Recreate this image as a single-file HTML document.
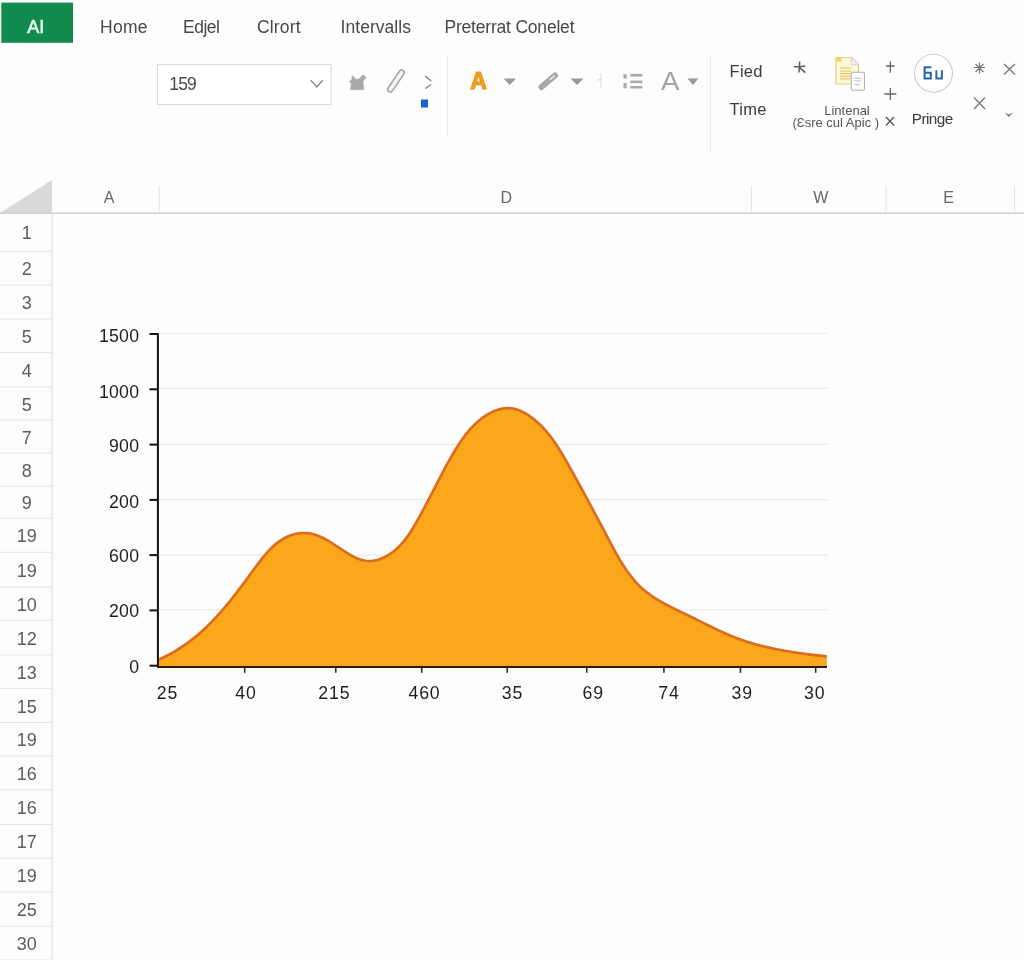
<!DOCTYPE html>
<html><head><meta charset="utf-8"><style>
html,body{margin:0;padding:0;background:#fdfdfd;}
body{width:1024px;height:960px;overflow:hidden;position:relative;font-family:"Liberation Sans",sans-serif;}
svg{position:absolute;left:0;top:0;will-change:transform;}
.tab{font-size:17.5px;fill:#484848;}
.rn{font-size:18px;fill:#5c5c5c;text-anchor:middle;}
.rl{stroke:#e6e6e6;stroke-width:1;}
.yl{font-size:17.7px;fill:#1e1e1e;text-anchor:end;letter-spacing:0.25px;}
.xl{font-size:17.7px;fill:#1e1e1e;text-anchor:middle;letter-spacing:0.9px;}
.tk{stroke:#111;stroke-width:2;}
.tk2{stroke:#222;stroke-width:1.5;}
.gl{stroke:#ebebeb;stroke-width:1.2;}
.ch{font-size:16px;fill:#666;text-anchor:middle;}
.rb{font-size:16.5px;fill:#3c3c3c;letter-spacing:0.3px;}
.gi{fill:#a9a9a9;}
</style></head><body>
<svg width="1024" height="960" viewBox="0 0 1024 960">
<rect x="1.3" y="2.6" width="71.7" height="40.2" fill="#118a4e"/>
<text x="35.7" y="32.8" font-size="18" fill="#e2fbea" text-anchor="middle" stroke="#e2fbea" stroke-width="0.65">AI</text>
<text x="100" y="33" class="tab" textLength="47.5">Home</text>
<text x="183" y="33" class="tab" textLength="37">Edjel</text>
<text x="257" y="33" class="tab" textLength="43.5">Clrort</text>
<text x="340.5" y="33" class="tab" textLength="70.5">Intervalls</text>
<text x="444.5" y="33" class="tab" textLength="130">Preterrat Conelet</text>

<rect x="157.5" y="64.5" width="173.5" height="40" fill="#fff" stroke="#dadada" stroke-width="1.1"/>
<text x="169.3" y="90" font-size="17.5" fill="#4a4a4a" textLength="27.5">159</text>
<path d="M310.8,80.3 L316.8,87 L322.8,80.3" fill="none" stroke="#858585" stroke-width="1.3"/>

<line x1="447.5" y1="55" x2="447.5" y2="137" stroke="#e8e8e8" stroke-width="1"/>
<line x1="710.5" y1="55" x2="710.5" y2="153" stroke="#e8e8e8" stroke-width="1"/>
<!-- blob icon -->
<path class="gi" d="M350.7,89.5 L351.3,83.1 L349.1,81.5 L351.8,79.9 L352.4,75.8 L356.1,79.5 L359.9,78.8 L361.5,76.1 L364.2,75.4 L366,77.7 L363.8,79.9 L362.8,81.5 L363.8,89.8 Z" stroke="#a9a9a9" stroke-width="0.8" stroke-linejoin="round"/>
<!-- pencil -->
<rect x="383.2" y="78.5" width="25.5" height="5.2" rx="2.6" transform="rotate(-56 395.9 81.1)" fill="#f4f4f4" stroke="#a6a6a6" stroke-width="1.6"/>
<!-- broken chevron -->
<path d="M425,76 L431.2,80.8" stroke="#8c8c8c" stroke-width="1.5"/>
<path d="M431,84.5 L425.3,88.7" stroke="#8c8c8c" stroke-width="1.5"/>
<rect x="421" y="99.5" width="7" height="8" fill="#1a62d0"/>
<!-- orange A -->
<text x="470.3" y="89" font-size="23" font-weight="bold" fill="#f2a023" stroke="#eb961c" stroke-width="1.1" stroke-linejoin="round" textLength="16.6" lengthAdjust="spacingAndGlyphs">A</text>
<path d="M503.5,78.5 L516,78.5 L509.75,85 Z" fill="#9a9a9a"/>
<!-- paperclip -->
<path d="M541.5,87 L555,75.5" stroke="#a8a8a8" stroke-width="6" stroke-linecap="round"/>
<path d="M550,79.5 L554.5,76" stroke="#fff" stroke-width="1.1" stroke-linecap="round"/>
<path d="M570.5,78.5 L583.5,78.5 L577,85 Z" fill="#9a9a9a"/>
<path d="M597,80.5 L601,79 M601,73 L601,88" fill="none" stroke="#dedede" stroke-width="1.1"/>
<!-- list -->
<rect x="623.5" y="74.2" width="3.2" height="4.4" class="gi"/>
<rect x="623.5" y="83" width="3.2" height="5.3" class="gi"/>
<rect x="630.4" y="73.9" width="12" height="2.7" class="gi"/>
<rect x="630.4" y="80.6" width="12" height="2.5" class="gi"/>
<rect x="630.4" y="86" width="12" height="2.5" class="gi"/>
<!-- gray A -->
<text x="661" y="89.5" font-size="25.5" fill="#a4a4a4" textLength="18.5" lengthAdjust="spacingAndGlyphs">A</text>
<path d="M687.5,78.5 L698.5,78.5 L693,85 Z" fill="#9a9a9a"/>

<!-- right group -->
<text x="729.5" y="77.2" class="rb">Fied</text>
<text x="729.5" y="115" class="rb">Time</text>
<path d="M799.7,61.5 L799,72.5 M794,66.8 L799.5,66.8 L805.3,66 M799.6,67.5 L805.3,72.6" fill="none" stroke="#5a5a5a" stroke-width="1.5"/>
<!-- doc icon -->
<path d="M835.8,57.5 L851.3,57.5 L858.6,64.8 L858.6,84 L835.8,84 Z" fill="#fdf6d8" stroke="#e6cf80" stroke-width="1.2" stroke-linejoin="round"/>
<path d="M851.3,57.5 L858.6,64.8" stroke="#b9b9b9" stroke-width="1.2"/>
<path d="M851.3,57.5 L851.3,64.8 L858.6,64.8 Z" fill="#f1f1f1" stroke="#cfcfcf" stroke-width="0.8"/>
<rect x="836.5" y="58" width="5" height="3.5" fill="#f3d060"/>
<path d="M840,68 L851,68 M840,71.1 L851,71.1 M840,73.6 L851,73.6 M840,76.2 L851,76.2 M840,78.8 L850,78.8" stroke="#e3c060" stroke-width="1"/>
<rect x="851.2" y="72.2" width="13.3" height="18" rx="1.5" fill="#fbfbfb" stroke="#b4b4b4" stroke-width="1.1"/>
<path d="M854.2,78.3 L861,78.3 M854.2,80.8 L861,80.8 M854.2,84.5 L860,84.5" stroke="#bdbdbd" stroke-width="0.9"/>
<text x="847" y="114.5" font-size="13" fill="#555" text-anchor="middle">Lintenal</text>
<text x="835.8" y="127" font-size="13" fill="#555" text-anchor="middle">(Ɛsre cul Apic )</text>
<!-- plus signs -->
<path d="M890.3,61.5 L890.3,72.8 M886,66 L894.6,66" stroke="#666" stroke-width="1.3"/>
<path d="M890.3,88 L890.3,100 M884.3,94 L896.3,94" stroke="#666" stroke-width="1.3"/>
<path d="M886,117 L894,125.5 M894,117 L886,125.5" stroke="#555" stroke-width="1.3"/>
<!-- circle -->
<circle cx="933.5" cy="73.3" r="19" fill="#fff" stroke="#cdcdcd" stroke-width="1.1"/>
<path d="M931.3,67.2 L924.6,67.2 L924.6,78.5 L930.8,78.5 L930.8,72.8 L925,72.8" fill="#e8f8ff" stroke="#2b67aa" stroke-width="2.1"/>
<path d="M936.4,70.2 L936.4,78.5 L941.9,78.5 M941.9,70.2 L941.9,79.4" fill="none" stroke="#2b67aa" stroke-width="2"/>
<text x="911.8" y="124.3" font-size="15.3" fill="#3c3c3c" textLength="41.5">Pringe</text>
<!-- asterisk right -->
<path d="M979.5,62.5 L979.5,73.5 M974,67.5 L985,67.5 M975.5,64 L983.5,72 M983.5,64 L975.5,72" stroke="#777" stroke-width="1.2"/>
<path d="M1004,64 L1015,74.5 M1015,64 L1004,74.5" stroke="#777" stroke-width="1.3"/>
<path d="M974,97.5 L985,109 M985,97.5 L974,109" stroke="#777" stroke-width="1.3"/>
<path d="M1004.6,112.4 L1008.8,117.3 L1013.2,112.4 L1008.8,114.3 Z" fill="#8a8a8a"/>

<path d="M0,213 L52,180 L52,213 Z" fill="#d9d9d9"/>
<line x1="0" y1="213.3" x2="1024" y2="213.3" stroke="#d0d0d0" stroke-width="1.5"/>
<line x1="159.3" y1="186" x2="159.3" y2="213" stroke="#e4e4e4" stroke-width="1"/>
<line x1="751.5" y1="186" x2="751.5" y2="213" stroke="#e4e4e4" stroke-width="1"/>
<line x1="886" y1="186" x2="886" y2="213" stroke="#e4e4e4" stroke-width="1"/>
<line x1="1014.5" y1="186" x2="1014.5" y2="213" stroke="#e4e4e4" stroke-width="1"/>
<text x="109" y="203" class="ch">A</text>
<text x="506.3" y="203" class="ch">D</text>
<text x="820.8" y="203" class="ch">W</text>
<text x="948.6" y="203" class="ch">E</text>

<line x1="52.2" y1="213" x2="52.2" y2="960" stroke="#e0e0e0" stroke-width="1.2"/>
<text x="26.8" y="239.2" class="rn">1</text>
<text x="26.8" y="275.2" class="rn">2</text>
<text x="26.8" y="309.1" class="rn">3</text>
<text x="26.8" y="342.9" class="rn">5</text>
<text x="26.8" y="376.8" class="rn">4</text>
<text x="26.8" y="410.6" class="rn">5</text>
<text x="26.8" y="443.6" class="rn">7</text>
<text x="26.8" y="476.5" class="rn">8</text>
<text x="26.8" y="509.1" class="rn">9</text>
<text x="26.8" y="542.3" class="rn">19</text>
<text x="26.8" y="576.7" class="rn">19</text>
<text x="26.8" y="610.7" class="rn">10</text>
<text x="26.8" y="644.6" class="rn">12</text>
<text x="26.8" y="678.7" class="rn">13</text>
<text x="26.8" y="712.5" class="rn">15</text>
<text x="26.8" y="746.2" class="rn">19</text>
<text x="26.8" y="779.8" class="rn">16</text>
<text x="26.8" y="814.1" class="rn">16</text>
<text x="26.8" y="848.4" class="rn">17</text>
<text x="26.8" y="882.1" class="rn">19</text>
<text x="26.8" y="916.1" class="rn">25</text>
<text x="26.8" y="950.1" class="rn">30</text>
<line x1="0" y1="251.3" x2="52" y2="251.3" class="rl"/>
<line x1="0" y1="285.1" x2="52" y2="285.1" class="rl"/>
<line x1="0" y1="319.1" x2="52" y2="319.1" class="rl"/>
<line x1="0" y1="352.6" x2="52" y2="352.6" class="rl"/>
<line x1="0" y1="387.0" x2="52" y2="387.0" class="rl"/>
<line x1="0" y1="420.2" x2="52" y2="420.2" class="rl"/>
<line x1="0" y1="453.0" x2="52" y2="453.0" class="rl"/>
<line x1="0" y1="486.0" x2="52" y2="486.0" class="rl"/>
<line x1="0" y1="518.3" x2="52" y2="518.3" class="rl"/>
<line x1="0" y1="552.3" x2="52" y2="552.3" class="rl"/>
<line x1="0" y1="587.1" x2="52" y2="587.1" class="rl"/>
<line x1="0" y1="620.3" x2="52" y2="620.3" class="rl"/>
<line x1="0" y1="655.0" x2="52" y2="655.0" class="rl"/>
<line x1="0" y1="688.4" x2="52" y2="688.4" class="rl"/>
<line x1="0" y1="722.5" x2="52" y2="722.5" class="rl"/>
<line x1="0" y1="755.9" x2="52" y2="755.9" class="rl"/>
<line x1="0" y1="789.8" x2="52" y2="789.8" class="rl"/>
<line x1="0" y1="824.5" x2="52" y2="824.5" class="rl"/>
<line x1="0" y1="858.3" x2="52" y2="858.3" class="rl"/>
<line x1="0" y1="892.0" x2="52" y2="892.0" class="rl"/>
<line x1="0" y1="926.2" x2="52" y2="926.2" class="rl"/>
<line x1="0" y1="960.0" x2="52" y2="960.0" class="rl"/>
<line x1="159" y1="609.8" x2="827.5" y2="609.8" class="gl"/>
<line x1="159" y1="554.8" x2="827.5" y2="554.8" class="gl"/>
<line x1="159" y1="499.7" x2="827.5" y2="499.7" class="gl"/>
<line x1="159" y1="444.4" x2="827.5" y2="444.4" class="gl"/>
<line x1="159" y1="388.4" x2="827.5" y2="388.4" class="gl"/>
<line x1="159" y1="333.5" x2="827.5" y2="333.5" class="gl"/>
<text x="139.3" y="342.3" class="yl">1500</text>
<line x1="149.5" y1="334.0" x2="158" y2="334.0" class="tk"/>
<text x="139.3" y="397.5" class="yl">1000</text>
<line x1="149.5" y1="389.3" x2="158" y2="389.3" class="tk"/>
<text x="139.3" y="452.0" class="yl">900</text>
<line x1="149.5" y1="444.6" x2="158" y2="444.6" class="tk"/>
<text x="139.3" y="507.9" class="yl">200</text>
<line x1="149.5" y1="499.9" x2="158" y2="499.9" class="tk"/>
<text x="139.3" y="562.2" class="yl">600</text>
<line x1="149.5" y1="555.1" x2="158" y2="555.1" class="tk"/>
<text x="139.3" y="617.0" class="yl">200</text>
<line x1="149.5" y1="610.4" x2="158" y2="610.4" class="tk"/>
<text x="139.3" y="672.6" class="yl">0</text>
<line x1="149.5" y1="665.7" x2="158" y2="665.7" class="tk"/>
<path d="M158.00,659.87 L160.38,658.88 L162.57,657.86 L164.73,656.81 L166.86,655.74 L168.96,654.64 L171.03,653.51 L173.08,652.36 L175.09,651.18 L177.08,649.98 L179.05,648.75 L180.99,647.50 L182.90,646.22 L184.79,644.92 L186.66,643.60 L188.50,642.26 L190.32,640.89 L192.12,639.50 L193.89,638.10 L195.65,636.67 L197.38,635.22 L199.10,633.75 L200.79,632.26 L202.47,630.75 L204.13,629.22 L205.77,627.68 L207.40,626.11 L209.01,624.53 L210.60,622.94 L212.18,621.32 L213.74,619.69 L215.30,618.05 L216.83,616.39 L218.36,614.71 L219.87,613.02 L221.37,611.31 L222.86,609.59 L224.34,607.86 L225.81,606.12 L227.27,604.36 L228.72,602.59 L230.16,600.81 L231.60,599.02 L233.03,597.22 L234.45,595.40 L235.87,593.58 L237.28,591.75 L238.69,589.91 L240.09,588.06 L241.50,586.20 L242.89,584.33 L244.29,582.46 L245.68,580.58 L247.08,578.69 L248.47,576.79 L249.86,574.89 L251.25,572.99 L252.65,571.08 L254.05,569.17 L255.45,567.25 L256.85,565.34 L258.27,563.44 L259.70,561.56 L261.15,559.70 L262.61,557.85 L264.09,556.04 L265.59,554.26 L267.11,552.52 L268.67,550.82 L270.25,549.17 L271.86,547.57 L273.51,546.03 L275.20,544.55 L276.92,543.14 L278.68,541.80 L280.49,540.53 L282.35,539.35 L284.26,538.25 L286.21,537.24 L288.22,536.32 L290.29,535.51 L292.41,534.79 L294.57,534.19 L296.77,533.71 L298.99,533.34 L301.22,533.11 L303.47,533.00 L305.70,533.03 L307.93,533.20 L310.13,533.52 L312.32,533.97 L314.48,534.56 L316.63,535.26 L318.76,536.06 L320.87,536.97 L322.97,537.97 L325.05,539.05 L327.12,540.20 L329.18,541.41 L331.23,542.67 L333.26,543.97 L335.29,545.30 L337.32,546.64 L339.33,547.99 L341.35,549.34 L343.36,550.66 L345.37,551.96 L347.38,553.22 L349.39,554.42 L351.41,555.56 L353.43,556.62 L355.46,557.60 L357.49,558.48 L359.54,559.25 L361.60,559.90 L363.66,560.41 L365.74,560.78 L367.84,561.00 L369.95,561.05 L372.08,560.92 L374.22,560.63 L376.36,560.19 L378.50,559.59 L380.62,558.86 L382.73,558.00 L384.82,557.01 L386.88,555.91 L388.89,554.70 L390.87,553.39 L392.80,552.00 L394.67,550.52 L396.48,548.98 L398.21,547.36 L399.89,545.69 L401.50,543.97 L403.05,542.19 L404.54,540.37 L405.99,538.51 L407.38,536.61 L408.73,534.68 L410.05,532.72 L411.32,530.74 L412.56,528.74 L413.77,526.72 L414.96,524.70 L416.12,522.67 L417.26,520.64 L418.39,518.61 L419.51,516.59 L420.62,514.57 L421.71,512.55 L422.79,510.54 L423.86,508.53 L424.93,506.53 L425.98,504.52 L427.03,502.52 L428.08,500.52 L429.12,498.52 L430.15,496.52 L431.18,494.52 L432.21,492.53 L433.24,490.53 L434.27,488.53 L435.31,486.54 L436.34,484.54 L437.37,482.54 L438.41,480.54 L439.46,478.54 L440.51,476.53 L441.57,474.53 L442.63,472.52 L443.70,470.51 L444.79,468.49 L445.88,466.47 L446.99,464.45 L448.10,462.43 L449.23,460.40 L450.38,458.36 L451.54,456.32 L452.72,454.29 L453.92,452.26 L455.13,450.23 L456.37,448.21 L457.63,446.21 L458.91,444.22 L460.22,442.25 L461.56,440.30 L462.92,438.38 L464.31,436.48 L465.73,434.62 L467.19,432.79 L468.67,430.99 L470.20,429.23 L471.75,427.52 L473.35,425.85 L474.98,424.23 L476.65,422.66 L478.36,421.14 L480.12,419.68 L481.92,418.28 L483.76,416.94 L485.65,415.67 L487.59,414.47 L489.58,413.34 L491.61,412.29 L493.69,411.33 L495.80,410.46 L497.94,409.71 L500.10,409.09 L502.28,408.60 L504.46,408.26 L506.65,408.07 L508.83,408.06 L511.01,408.23 L513.17,408.57 L515.31,409.06 L517.43,409.71 L519.53,410.49 L521.60,411.39 L523.64,412.40 L525.64,413.52 L527.61,414.72 L529.53,416.00 L531.42,417.34 L533.25,418.73 L535.04,420.17 L536.79,421.66 L538.49,423.20 L540.16,424.78 L541.78,426.41 L543.37,428.07 L544.91,429.78 L546.43,431.51 L547.91,433.29 L549.36,435.09 L550.77,436.93 L552.16,438.79 L553.52,440.67 L554.85,442.59 L556.16,444.52 L557.45,446.47 L558.71,448.44 L559.96,450.43 L561.18,452.42 L562.39,454.43 L563.58,456.45 L564.76,458.48 L565.93,460.51 L567.08,462.55 L568.23,464.58 L569.36,466.62 L570.49,468.65 L571.61,470.68 L572.73,472.70 L573.85,474.71 L574.96,476.73 L576.06,478.73 L577.16,480.74 L578.26,482.74 L579.36,484.74 L580.45,486.73 L581.54,488.73 L582.62,490.72 L583.70,492.71 L584.78,494.70 L585.86,496.69 L586.93,498.67 L588.01,500.66 L589.08,502.65 L590.15,504.64 L591.22,506.62 L592.29,508.61 L593.36,510.61 L594.42,512.60 L595.49,514.60 L596.56,516.60 L597.62,518.60 L598.69,520.60 L599.76,522.61 L600.83,524.63 L601.90,526.64 L602.97,528.67 L604.04,530.70 L605.11,532.73 L606.19,534.77 L607.27,536.82 L608.35,538.87 L609.43,540.93 L610.52,542.99 L611.61,545.05 L612.72,547.11 L613.83,549.17 L614.95,551.23 L616.08,553.28 L617.23,555.32 L618.40,557.34 L619.58,559.36 L620.77,561.36 L621.99,563.35 L623.23,565.31 L624.49,567.26 L625.77,569.18 L627.08,571.08 L628.42,572.95 L629.79,574.79 L631.18,576.60 L632.61,578.38 L634.06,580.13 L635.56,581.83 L637.08,583.50 L638.65,585.13 L640.25,586.71 L641.90,588.25 L643.58,589.74 L645.31,591.19 L647.07,592.59 L648.87,593.95 L650.71,595.28 L652.57,596.56 L654.47,597.81 L656.40,599.03 L658.35,600.22 L660.32,601.38 L662.32,602.51 L664.34,603.62 L666.37,604.71 L668.42,605.78 L670.48,606.84 L672.56,607.88 L674.64,608.91 L676.73,609.93 L678.83,610.95 L680.92,611.95 L683.02,612.96 L685.12,613.97 L687.22,614.98 L689.30,615.99 L691.39,617.01 L693.46,618.03 L695.53,619.06 L697.60,620.09 L699.66,621.12 L701.72,622.15 L703.77,623.17 L705.83,624.20 L707.88,625.21 L709.94,626.23 L711.99,627.23 L714.05,628.23 L716.11,629.21 L718.17,630.19 L720.24,631.15 L722.31,632.10 L724.38,633.03 L726.47,633.95 L728.56,634.85 L730.66,635.73 L732.76,636.59 L734.88,637.42 L737.01,638.24 L739.15,639.03 L741.29,639.79 L743.45,640.54 L745.62,641.26 L747.80,641.96 L749.98,642.63 L752.17,643.29 L754.37,643.93 L756.58,644.55 L758.80,645.14 L761.02,645.72 L763.25,646.28 L765.48,646.82 L767.72,647.35 L769.97,647.85 L772.22,648.34 L774.48,648.82 L776.74,649.28 L779.00,649.72 L781.27,650.15 L783.54,650.56 L785.81,650.96 L788.09,651.35 L790.36,651.72 L792.64,652.08 L794.92,652.43 L797.20,652.77 L799.48,653.10 L801.77,653.41 L804.05,653.72 L806.33,654.01 L808.61,654.30 L810.89,654.58 L813.16,654.85 L815.44,655.11 L817.71,655.37 L819.98,655.61 L822.24,655.86 L824.51,656.09 L826.77,656.32 L826.8,667 L158,667 Z" fill="#fba71c"/>
<path d="M158.00,659.87 L160.38,658.88 L162.57,657.86 L164.73,656.81 L166.86,655.74 L168.96,654.64 L171.03,653.51 L173.08,652.36 L175.09,651.18 L177.08,649.98 L179.05,648.75 L180.99,647.50 L182.90,646.22 L184.79,644.92 L186.66,643.60 L188.50,642.26 L190.32,640.89 L192.12,639.50 L193.89,638.10 L195.65,636.67 L197.38,635.22 L199.10,633.75 L200.79,632.26 L202.47,630.75 L204.13,629.22 L205.77,627.68 L207.40,626.11 L209.01,624.53 L210.60,622.94 L212.18,621.32 L213.74,619.69 L215.30,618.05 L216.83,616.39 L218.36,614.71 L219.87,613.02 L221.37,611.31 L222.86,609.59 L224.34,607.86 L225.81,606.12 L227.27,604.36 L228.72,602.59 L230.16,600.81 L231.60,599.02 L233.03,597.22 L234.45,595.40 L235.87,593.58 L237.28,591.75 L238.69,589.91 L240.09,588.06 L241.50,586.20 L242.89,584.33 L244.29,582.46 L245.68,580.58 L247.08,578.69 L248.47,576.79 L249.86,574.89 L251.25,572.99 L252.65,571.08 L254.05,569.17 L255.45,567.25 L256.85,565.34 L258.27,563.44 L259.70,561.56 L261.15,559.70 L262.61,557.85 L264.09,556.04 L265.59,554.26 L267.11,552.52 L268.67,550.82 L270.25,549.17 L271.86,547.57 L273.51,546.03 L275.20,544.55 L276.92,543.14 L278.68,541.80 L280.49,540.53 L282.35,539.35 L284.26,538.25 L286.21,537.24 L288.22,536.32 L290.29,535.51 L292.41,534.79 L294.57,534.19 L296.77,533.71 L298.99,533.34 L301.22,533.11 L303.47,533.00 L305.70,533.03 L307.93,533.20 L310.13,533.52 L312.32,533.97 L314.48,534.56 L316.63,535.26 L318.76,536.06 L320.87,536.97 L322.97,537.97 L325.05,539.05 L327.12,540.20 L329.18,541.41 L331.23,542.67 L333.26,543.97 L335.29,545.30 L337.32,546.64 L339.33,547.99 L341.35,549.34 L343.36,550.66 L345.37,551.96 L347.38,553.22 L349.39,554.42 L351.41,555.56 L353.43,556.62 L355.46,557.60 L357.49,558.48 L359.54,559.25 L361.60,559.90 L363.66,560.41 L365.74,560.78 L367.84,561.00 L369.95,561.05 L372.08,560.92 L374.22,560.63 L376.36,560.19 L378.50,559.59 L380.62,558.86 L382.73,558.00 L384.82,557.01 L386.88,555.91 L388.89,554.70 L390.87,553.39 L392.80,552.00 L394.67,550.52 L396.48,548.98 L398.21,547.36 L399.89,545.69 L401.50,543.97 L403.05,542.19 L404.54,540.37 L405.99,538.51 L407.38,536.61 L408.73,534.68 L410.05,532.72 L411.32,530.74 L412.56,528.74 L413.77,526.72 L414.96,524.70 L416.12,522.67 L417.26,520.64 L418.39,518.61 L419.51,516.59 L420.62,514.57 L421.71,512.55 L422.79,510.54 L423.86,508.53 L424.93,506.53 L425.98,504.52 L427.03,502.52 L428.08,500.52 L429.12,498.52 L430.15,496.52 L431.18,494.52 L432.21,492.53 L433.24,490.53 L434.27,488.53 L435.31,486.54 L436.34,484.54 L437.37,482.54 L438.41,480.54 L439.46,478.54 L440.51,476.53 L441.57,474.53 L442.63,472.52 L443.70,470.51 L444.79,468.49 L445.88,466.47 L446.99,464.45 L448.10,462.43 L449.23,460.40 L450.38,458.36 L451.54,456.32 L452.72,454.29 L453.92,452.26 L455.13,450.23 L456.37,448.21 L457.63,446.21 L458.91,444.22 L460.22,442.25 L461.56,440.30 L462.92,438.38 L464.31,436.48 L465.73,434.62 L467.19,432.79 L468.67,430.99 L470.20,429.23 L471.75,427.52 L473.35,425.85 L474.98,424.23 L476.65,422.66 L478.36,421.14 L480.12,419.68 L481.92,418.28 L483.76,416.94 L485.65,415.67 L487.59,414.47 L489.58,413.34 L491.61,412.29 L493.69,411.33 L495.80,410.46 L497.94,409.71 L500.10,409.09 L502.28,408.60 L504.46,408.26 L506.65,408.07 L508.83,408.06 L511.01,408.23 L513.17,408.57 L515.31,409.06 L517.43,409.71 L519.53,410.49 L521.60,411.39 L523.64,412.40 L525.64,413.52 L527.61,414.72 L529.53,416.00 L531.42,417.34 L533.25,418.73 L535.04,420.17 L536.79,421.66 L538.49,423.20 L540.16,424.78 L541.78,426.41 L543.37,428.07 L544.91,429.78 L546.43,431.51 L547.91,433.29 L549.36,435.09 L550.77,436.93 L552.16,438.79 L553.52,440.67 L554.85,442.59 L556.16,444.52 L557.45,446.47 L558.71,448.44 L559.96,450.43 L561.18,452.42 L562.39,454.43 L563.58,456.45 L564.76,458.48 L565.93,460.51 L567.08,462.55 L568.23,464.58 L569.36,466.62 L570.49,468.65 L571.61,470.68 L572.73,472.70 L573.85,474.71 L574.96,476.73 L576.06,478.73 L577.16,480.74 L578.26,482.74 L579.36,484.74 L580.45,486.73 L581.54,488.73 L582.62,490.72 L583.70,492.71 L584.78,494.70 L585.86,496.69 L586.93,498.67 L588.01,500.66 L589.08,502.65 L590.15,504.64 L591.22,506.62 L592.29,508.61 L593.36,510.61 L594.42,512.60 L595.49,514.60 L596.56,516.60 L597.62,518.60 L598.69,520.60 L599.76,522.61 L600.83,524.63 L601.90,526.64 L602.97,528.67 L604.04,530.70 L605.11,532.73 L606.19,534.77 L607.27,536.82 L608.35,538.87 L609.43,540.93 L610.52,542.99 L611.61,545.05 L612.72,547.11 L613.83,549.17 L614.95,551.23 L616.08,553.28 L617.23,555.32 L618.40,557.34 L619.58,559.36 L620.77,561.36 L621.99,563.35 L623.23,565.31 L624.49,567.26 L625.77,569.18 L627.08,571.08 L628.42,572.95 L629.79,574.79 L631.18,576.60 L632.61,578.38 L634.06,580.13 L635.56,581.83 L637.08,583.50 L638.65,585.13 L640.25,586.71 L641.90,588.25 L643.58,589.74 L645.31,591.19 L647.07,592.59 L648.87,593.95 L650.71,595.28 L652.57,596.56 L654.47,597.81 L656.40,599.03 L658.35,600.22 L660.32,601.38 L662.32,602.51 L664.34,603.62 L666.37,604.71 L668.42,605.78 L670.48,606.84 L672.56,607.88 L674.64,608.91 L676.73,609.93 L678.83,610.95 L680.92,611.95 L683.02,612.96 L685.12,613.97 L687.22,614.98 L689.30,615.99 L691.39,617.01 L693.46,618.03 L695.53,619.06 L697.60,620.09 L699.66,621.12 L701.72,622.15 L703.77,623.17 L705.83,624.20 L707.88,625.21 L709.94,626.23 L711.99,627.23 L714.05,628.23 L716.11,629.21 L718.17,630.19 L720.24,631.15 L722.31,632.10 L724.38,633.03 L726.47,633.95 L728.56,634.85 L730.66,635.73 L732.76,636.59 L734.88,637.42 L737.01,638.24 L739.15,639.03 L741.29,639.79 L743.45,640.54 L745.62,641.26 L747.80,641.96 L749.98,642.63 L752.17,643.29 L754.37,643.93 L756.58,644.55 L758.80,645.14 L761.02,645.72 L763.25,646.28 L765.48,646.82 L767.72,647.35 L769.97,647.85 L772.22,648.34 L774.48,648.82 L776.74,649.28 L779.00,649.72 L781.27,650.15 L783.54,650.56 L785.81,650.96 L788.09,651.35 L790.36,651.72 L792.64,652.08 L794.92,652.43 L797.20,652.77 L799.48,653.10 L801.77,653.41 L804.05,653.72 L806.33,654.01 L808.61,654.30 L810.89,654.58 L813.16,654.85 L815.44,655.11 L817.71,655.37 L819.98,655.61 L822.24,655.86 L824.51,656.09 L826.77,656.32" fill="none" stroke="#dc6d1d" stroke-width="2.7" stroke-linejoin="round"/>
<line x1="157.9" y1="333" x2="157.9" y2="667.5" stroke="#111" stroke-width="2"/>
<line x1="157" y1="667" x2="827" y2="667" stroke="#2a1a10" stroke-width="2"/>
<text x="167.5" y="699" class="xl">25</text>
<text x="246.0" y="699" class="xl">40</text>
<text x="334.3" y="699" class="xl">215</text>
<text x="424.5" y="699" class="xl">460</text>
<text x="512.5" y="699" class="xl">35</text>
<text x="593.3" y="699" class="xl">69</text>
<text x="669.1" y="699" class="xl">74</text>
<text x="742.3" y="699" class="xl">39</text>
<text x="814.8" y="699" class="xl">30</text>
<line x1="244.7" y1="667" x2="244.7" y2="672.8" class="tk2"/>
<line x1="335.8" y1="667" x2="335.8" y2="672.8" class="tk2"/>
<line x1="421.7" y1="667" x2="421.7" y2="672.8" class="tk2"/>
<line x1="507.2" y1="667" x2="507.2" y2="672.8" class="tk2"/>
<line x1="586.8" y1="667" x2="586.8" y2="672.8" class="tk2"/>
<line x1="663.9" y1="667" x2="663.9" y2="672.8" class="tk2"/>
<line x1="740.5" y1="667" x2="740.5" y2="672.8" class="tk2"/>
<line x1="815.7" y1="667" x2="815.7" y2="672.8" class="tk2"/>
</svg>
</body></html>
